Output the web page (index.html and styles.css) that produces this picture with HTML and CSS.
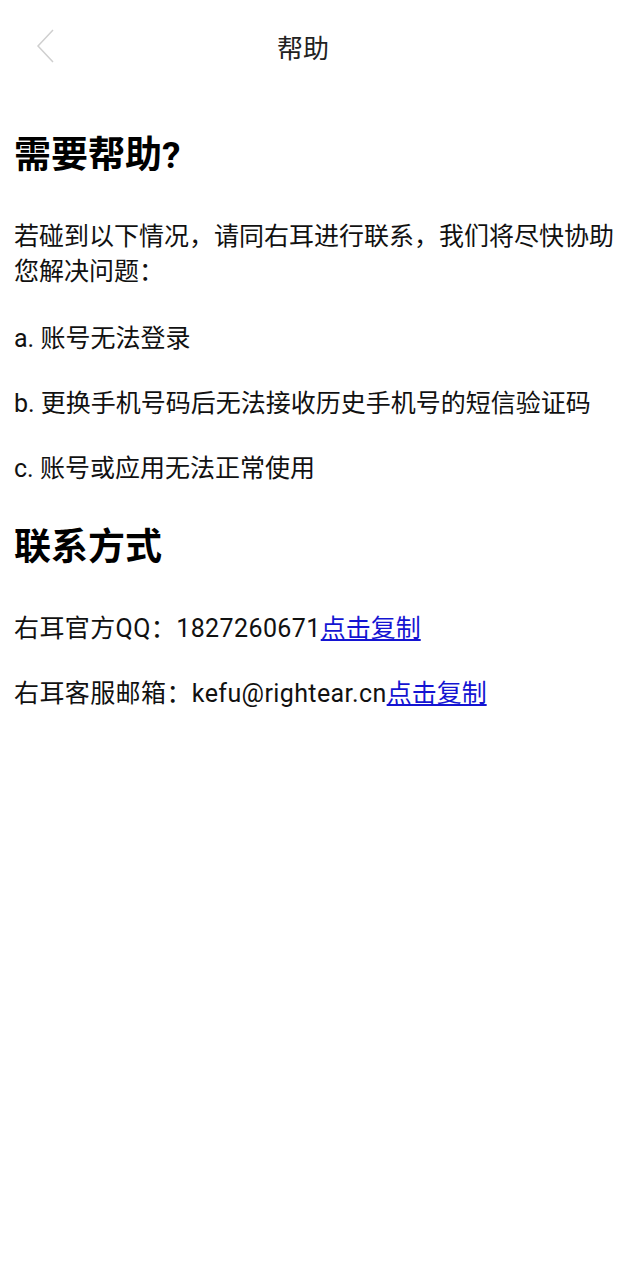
FILE: index.html
```html
<!doctype html>
<html lang="zh-CN">
  <head>
    <meta charset="UTF-8" />
    <meta name="viewport" content="width=device-width, initial-scale=1.0" />
    <title>帮助</title>
    <link rel="stylesheet" href="styles.css">
  </head>
  <body>
    <header class="nav">
      <a class="back" href="#">
        <svg width="20" height="34" viewBox="0 0 20 34">
          <polyline points="17,1 2,17 17,33" fill="none" stroke="#cfcfcf" stroke-width="1.5" />
        </svg>
      </a>
      <span class="nav-title">帮助</span>
    </header>

    <main class="content">
      <h1>需要帮助?</h1>
      <p class="intro">若碰到以下情况，请同右耳进行联系，我们将尽快协助您解决问题：</p>
      <p>a. 账号无法登录</p>
      <p>b. 更换手机号码后无法接收历史手机号的短信验证码</p>
      <p>c. 账号或应用无法正常使用</p>

      <h1 class="second">联系方式</h1>
      <p><span class="latin">右耳官方QQ：1827260671</span><a href="#" class="copy">点击复制</a></p>
      <p><span class="latin">右耳客服邮箱：kefu@rightear.cn</span><a href="#" class="copy">点击复制</a></p>
    </main>
  </body>
</html>
```

FILE: styles.css
```css
body {
  margin: 0;
  font-family: Roboto, "Noto Sans CJK SC", sans-serif;
  color: #111;
  background: #fff;
}
.nav {
  position: relative;
  height: 92px;
  padding-right: 24px;
  display: flex;
  align-items: center;
  justify-content: center;
}
.back {
  position: absolute;
  left: 36px;
  top: 29px;
  display: block;
  line-height: 0;
}
.nav-title {
  font-size: 26px;
  color: #222;
}
.content {
  padding: 0 6px 0 14px;
}
h1 {
  font-size: 37px;
  line-height: 43px;
  font-weight: 700;
  margin: 42px 0;
  color: #000;
}
h1.second {
  margin-top: 40px;
}
p {
  font-size: 25px;
  line-height: 35px;
  margin: 30px 0;
}
p.intro {
  margin-bottom: 32px;
}
.latin {
  letter-spacing: 0.4px;
}
.copy {
  color: #1414d2;
  text-decoration: underline;
}
```
